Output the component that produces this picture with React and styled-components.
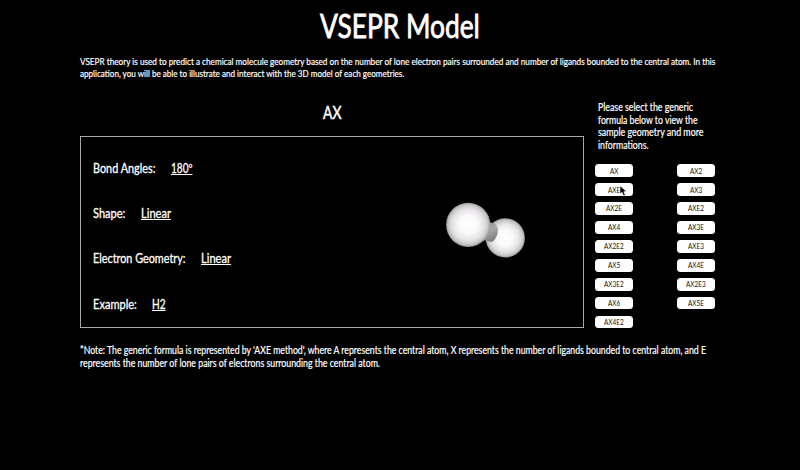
import React from "react";
import styled, { createGlobalStyle } from "styled-components";

const GlobalStyle = createGlobalStyle`
  * { box-sizing: border-box; }
  html, body { margin: 0; background: #000; }
  body { font-family: "Lato", sans-serif; color: #fff; overflow: hidden; }
`;

const Page = styled.main`
  position: relative;
  width: 800px;
  height: 470px;
  padding: 0 80px;
  background: #000;
`;

/* One line of condensed lettering: $w is its set width, $k the condensing ratio. */
const Line = styled.span`
  display: block;
  width: ${(p) => p.$w}px;
  white-space: nowrap;
  transform: scaleX(${(p) => p.$k});
  transform-origin: 0 50%;
`;

const Title = styled.h1`
  display: flex;
  justify-content: center;
  height: 55px;
  margin: 0;
  padding-top: 6px;
  font-size: 32px;
  line-height: 40px;
  font-weight: 400;
  -webkit-text-stroke: 0.8px #fff;
`;

const Intro = styled.p`
  margin: 0;
  height: 45px;
  font-size: 10px;
  line-height: 12px;
  -webkit-text-stroke: 0.2px #fff;
`;

const Content = styled.div`
  display: flex;
  gap: 11px;
`;

const Viewer = styled.section`
  width: 504px;
`;

const Formula = styled.h2`
  display: flex;
  justify-content: center;
  margin: 0;
  height: 36px;
  font-size: 18px;
  line-height: 24px;
  font-weight: 400;
  -webkit-text-stroke: 0.5px #fff;
`;

const Panel = styled.div`
  display: flex;
  justify-content: space-between;
  height: 192px;
  border: 1px solid #a8a8a8;
`;

const Facts = styled.dl`
  margin: 0;
  padding: 21.6px 0 0 12px;
`;

const Fact = styled.div`
  display: flex;
  gap: 15px;
  height: 45.45px;
  font-size: 13px;
  line-height: 18px;
  -webkit-text-stroke: 0.3px #fff;
`;

const Label = styled.dt`
  margin: 0;
`;

const Value = styled.dd`
  margin: 0;
  text-decoration: underline;
  text-decoration-thickness: 1px;
  text-underline-offset: 1px;
`;

const Molecule = styled.svg`
  width: 110px;
  height: 80px;
  margin: 53px 43px 0 0;
`;

const Sidebar = styled.aside`
  width: 120px;
`;

const Prompt = styled.p`
  margin: 0;
  padding: 1px 0 0 3.4px;
  height: 64.3px;
  font-size: 10.6px;
  line-height: 12.7px;
  -webkit-text-stroke: 0.2px #fff;
`;

const Options = styled.div`
  display: grid;
  grid-template-columns: 38px 38px;
  grid-auto-rows: 12.5px;
  gap: 6.46px 43.5px;
`;

const Option = styled.button`
  display: flex;
  align-items: center;
  justify-content: center;
  padding: 0;
  border: 0;
  border-radius: 3.5px;
  background: #fff;
  color: #111;
  font: 7.8px/10px "Lato", sans-serif;
`;

const Note = styled.p`
  margin: 16px 0 0;
  font-size: 10.6px;
  line-height: 12.8px;
  -webkit-text-stroke: 0.2px #fff;
`;

const Pointer = styled.svg`
  position: absolute;
  left: 619px;
  top: 185px;
  width: 8px;
  height: 12px;
`;

const facts = [
  ["Bond Angles:", 62.5, 0.836, "180º", 21.5, 0.772],
  ["Shape:", 32.5, 0.85, "Linear", 30, 0.855],
  ["Electron Geometry:", 92.5, 0.832, "Linear", 30, 0.855],
  ["Example:", 44, 0.85, "H2", 13.5, 0.773],
];

const options = [
  ["AX", 8.4], ["AX2", 12], ["AXE", 12.4], ["AX3", 12], ["AX2E", 15.8], ["AXE2", 15.8],
  ["AX4", 12], ["AX3E", 15.8], ["AX2E2", 19.5], ["AXE3", 15.8], ["AX5", 12], ["AX4E", 15.8],
  ["AX3E2", 19.5], ["AX2E3", 19.5], ["AX6", 12], ["AX5E", 15.8], ["AX4E2", 19.5],
];

function MoleculeModel() {
  return (
    <Molecule viewBox="0 0 110 80">
      <defs>
        <radialGradient id="atom" cx=".5" cy=".5" r=".5">
          <stop offset="0" stopColor="#fff" />
          <stop offset=".4" stopColor="#fbf9fb" />
          <stop offset=".72" stopColor="#e4e2e4" />
          <stop offset=".9" stopColor="#c6c4c6" />
          <stop offset="1" stopColor="#989698" />
        </radialGradient>
        <linearGradient id="bond" x1="0" y1="0" x2=".3" y2="1">
          <stop offset="0" stopColor="#8c8c8c" />
          <stop offset=".5" stopColor="#aaa" />
          <stop offset="1" stopColor="#808080" />
        </linearGradient>
      </defs>
      <circle cx="75.3" cy="47.9" r="19.6" fill="url(#atom)" />
      <path d="M56 31 L65 33.8 Q68.6 37 67.6 43 Q66 50 61.5 52 L53 50 Z" fill="url(#bond)" />
      <circle cx="38.2" cy="34.8" r="22.1" fill="url(#atom)" />
    </Molecule>
  );
}

export default function App() {
  return (
    <>
      <GlobalStyle />
      <Page>
        <Title><Line $w={160} $k={0.823}>VSEPR Model</Line></Title>
        <Intro>
          <Line $w={635} $k={0.819}>VSEPR theory is used to predict a chemical molecule geometry based on the number of lone electron pairs surrounded and number of ligands bounded to the central atom. In this</Line>
          <Line $w={324} $k={0.81}>application, you will be able to illustrate and interact with the 3D model of each geometries.</Line>
        </Intro>
        <Content>
          <Viewer>
            <Formula><Line $w={18.5} $k={0.77}>AX</Line></Formula>
            <Panel>
              <Facts>
                {facts.map(([label, lw, lk, value, vw, vk]) => (
                  <Fact key={label}>
                    <Label><Line $w={lw} $k={lk}>{label}</Line></Label>
                    <Value><Line $w={vw} $k={vk}>{value}</Line></Value>
                  </Fact>
                ))}
              </Facts>
              <MoleculeModel />
            </Panel>
          </Viewer>
          <Sidebar>
            <Prompt>
              <Line $w={95} $k={0.83}>Please select the generic</Line>
              <Line $w={99.5} $k={0.821}>formula below to view the</Line>
              <Line $w={105.5} $k={0.837}>sample geometry and more</Line>
              <Line $w={50.5} $k={0.825}>informations.</Line>
            </Prompt>
            <Options>
              {options.map(([name, w]) => (
                <Option key={name}><Line $w={w} $k={0.82}>{name}</Line></Option>
              ))}
            </Options>
          </Sidebar>
        </Content>
        <Note>
          <Line $w={626} $k={0.823}>*Note: The generic formula is represented by 'AXE method', where A represents the central atom, X represents the number of ligands bounded to central atom, and E</Line>
          <Line $w={300} $k={0.828}>represents the number of lone pairs of electrons surrounding the central atom.</Line>
        </Note>
        <Pointer viewBox="0 0 8 12">
          <path d="M1 .7 L1 9 L3 7.2 L4.5 10.8 L6.3 10 L4.8 6.7 L7.4 6.5 Z" fill="#000" stroke="#fff" strokeWidth=".6" />
        </Pointer>
      </Page>
    </>
  );
}
